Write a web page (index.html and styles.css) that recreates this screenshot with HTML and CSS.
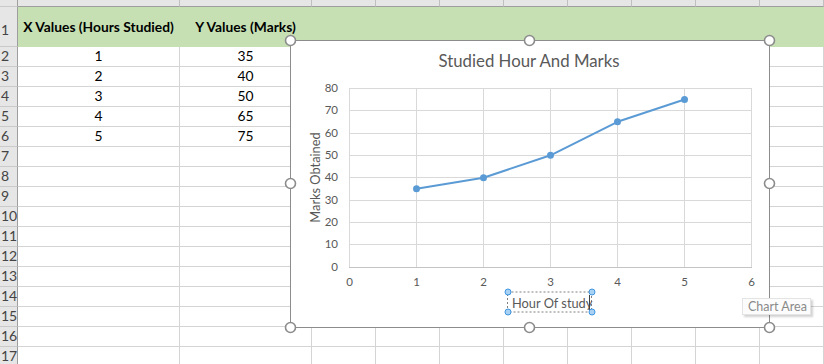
FILE: index.html
```html
<!DOCTYPE html>
<html lang="en">
<head>
  <meta charset="UTF-8">
  <title>Studied Hour And Marks</title>
  <link rel="stylesheet" href="styles.css">
</head>
<body>

<div class="sheet">
  <!-- column headers (cut off at the top) -->
  <div class="row head-row">
    <div class="num"></div><div><span>A</span></div><div><span>B</span></div><div><span>C</span></div><div><span>D</span></div><div><span>E</span></div><div><span>F</span></div><div><span>G</span></div><div><span>H</span></div><div><span>I</span></div><div><span>J</span></div>
  </div>
  <div class="row title-row">
    <div class="num">1</div><div class="bold">X Values (Hours Studied)</div><div class="bold">Y Values (Marks)</div><div></div><div></div><div></div><div></div><div></div><div></div><div></div><div></div>
  </div>
  <div class="row"><div class="num">2</div><div>1</div><div>35</div><div></div><div></div><div></div><div></div><div></div><div></div><div></div><div></div></div>
  <div class="row"><div class="num">3</div><div>2</div><div>40</div><div></div><div></div><div></div><div></div><div></div><div></div><div></div><div></div></div>
  <div class="row"><div class="num">4</div><div>3</div><div>50</div><div></div><div></div><div></div><div></div><div></div><div></div><div></div><div></div></div>
  <div class="row"><div class="num">5</div><div>4</div><div>65</div><div></div><div></div><div></div><div></div><div></div><div></div><div></div><div></div></div>
  <div class="row"><div class="num">6</div><div>5</div><div>75</div><div></div><div></div><div></div><div></div><div></div><div></div><div></div><div></div></div>
  <div class="row"><div class="num">7</div><div></div><div></div><div></div><div></div><div></div><div></div><div></div><div></div><div></div><div></div></div>
  <div class="row"><div class="num">8</div><div></div><div></div><div></div><div></div><div></div><div></div><div></div><div></div><div></div><div></div></div>
  <div class="row"><div class="num">9</div><div></div><div></div><div></div><div></div><div></div><div></div><div></div><div></div><div></div><div></div></div>
  <div class="row"><div class="num">10</div><div></div><div></div><div></div><div></div><div></div><div></div><div></div><div></div><div></div><div></div></div>
  <div class="row"><div class="num">11</div><div></div><div></div><div></div><div></div><div></div><div></div><div></div><div></div><div></div><div></div></div>
  <div class="row"><div class="num">12</div><div></div><div></div><div></div><div></div><div></div><div></div><div></div><div></div><div></div><div></div></div>
  <div class="row"><div class="num">13</div><div></div><div></div><div></div><div></div><div></div><div></div><div></div><div></div><div></div><div></div></div>
  <div class="row"><div class="num">14</div><div></div><div></div><div></div><div></div><div></div><div></div><div></div><div></div><div></div><div></div></div>
  <div class="row"><div class="num">15</div><div></div><div></div><div></div><div></div><div></div><div></div><div></div><div></div><div></div><div></div></div>
  <div class="row"><div class="num">16</div><div></div><div></div><div></div><div></div><div></div><div></div><div></div><div></div><div></div><div></div></div>
  <div class="row"><div class="num">17</div><div></div><div></div><div></div><div></div><div></div><div></div><div></div><div></div><div></div><div></div></div>

  <!-- chart object floating over the cells -->
  <div class="chart">
    <svg width="480" height="288" viewBox="0 0 480 288">
      <text class="chart-title" x="239" y="27" text-anchor="middle">Studied Hour And Marks</text>

      <!-- gridlines -->
      <g class="grid">
        <line x1="59" y1="48.5" x2="461" y2="48.5"/>
        <line x1="59" y1="70.5" x2="461" y2="70.5"/>
        <line x1="59" y1="93.5" x2="461" y2="93.5"/>
        <line x1="59" y1="115.5" x2="461" y2="115.5"/>
        <line x1="59" y1="137.5" x2="461" y2="137.5"/>
        <line x1="59" y1="160.5" x2="461" y2="160.5"/>
        <line x1="59" y1="182.5" x2="461" y2="182.5"/>
        <line x1="59" y1="204.5" x2="461" y2="204.5"/>
        <line x1="59.5" y1="48" x2="59.5" y2="227"/>
        <line x1="126.5" y1="48" x2="126.5" y2="227"/>
        <line x1="193.5" y1="48" x2="193.5" y2="227"/>
        <line x1="260.5" y1="48" x2="260.5" y2="227"/>
        <line x1="327.5" y1="48" x2="327.5" y2="227"/>
        <line x1="394.5" y1="48" x2="394.5" y2="227"/>
        <line x1="461.5" y1="48" x2="461.5" y2="227"/>
      </g>
      <line class="axis" x1="59" y1="227.5" x2="462" y2="227.5"/>

      <!-- y axis labels -->
      <g class="tick" text-anchor="end">
        <text x="48" y="51.5">80</text>
        <text x="48" y="73.5">70</text>
        <text x="48" y="96.5">60</text>
        <text x="48" y="118.5">50</text>
        <text x="48" y="140.5">40</text>
        <text x="48" y="163.5">30</text>
        <text x="48" y="185.5">20</text>
        <text x="48" y="207.5">10</text>
        <text x="48" y="230.5">0</text>
      </g>
      <!-- x axis labels -->
      <g class="tick" text-anchor="middle">
        <text x="59.5" y="245.5">0</text>
        <text x="126.5" y="245.5">1</text>
        <text x="193.5" y="245.5">2</text>
        <text x="260.5" y="245.5">3</text>
        <text x="327.5" y="245.5">4</text>
        <text x="394.5" y="245.5">5</text>
        <text x="461.5" y="245.5">6</text>
      </g>

      <g transform="translate(30 137.5) rotate(-90)">
        <text class="axis-title" x="0" y="0" text-anchor="middle">Marks Obtained</text>
      </g>

      <!-- series -->
      <polyline class="series" points="126.5,148.8 193.5,137.7 260.5,115.3 327.5,81.8 394.5,59.5"/>
      <g class="marker">
        <circle cx="126.5" cy="148.8" r="3.5"/>
        <circle cx="193.5" cy="137.7" r="3.5"/>
        <circle cx="260.5" cy="115.3" r="3.5"/>
        <circle cx="327.5" cy="81.8" r="3.5"/>
        <circle cx="394.5" cy="59.5" r="3.5"/>
      </g>

      <!-- selected x axis title -->
      <rect class="title-box" x="217.5" y="252" width="84" height="20"/>
      <text class="axis-title" x="222" y="268">Hour Of study</text>
      <line class="caret" x1="299.5" y1="255" x2="299.5" y2="271"/>
      <g class="sel-handle">
        <circle cx="218" cy="252" r="3"/>
        <circle cx="218" cy="272" r="3"/>
        <circle cx="302" cy="252" r="3"/>
        <circle cx="302" cy="272" r="3"/>
      </g>

      <!-- chart frame + resize handles -->
      <rect class="frame" x="0.5" y="0.5" width="479" height="287"/>
      <g class="handle">
        <circle cx="0.5" cy="0.5" r="5"/>
        <circle cx="239.5" cy="0.5" r="5"/>
        <circle cx="479.5" cy="0.5" r="5"/>
        <circle cx="0.5" cy="143.5" r="5"/>
        <circle cx="479.5" cy="143.5" r="5"/>
        <circle cx="0.5" cy="287.5" r="5"/>
        <circle cx="239.5" cy="287.5" r="5"/>
        <circle cx="479.5" cy="287.5" r="5"/>
      </g>
    </svg>
  </div>

  <div class="tooltip">Chart Area</div>
</div>

</body>
</html>
```

FILE: styles.css
```css
* {
  margin: 0;
  padding: 0;
  box-sizing: border-box;
}
body {
  font-family: Lato, 'Liberation Sans', sans-serif;
  background: #fff;
  overflow: hidden;
}
.sheet {
  position: relative;
  width: 824px;
  height: 364px;
  overflow: hidden;
}
.row {
  display: grid;
  grid-template-columns: 18px 162px 132px repeat(8, 64px);
  height: 20px;
}
.row > div {
  display: flex;
  align-items: flex-end;
  justify-content: center;
  padding-bottom: 3px;
  border-right: 1px solid #d4d4d4;
  border-bottom: 1px solid #d4d4d4;
  font-size: 13.8px;
  line-height: 14px;
  color: #000;
  white-space: nowrap;
}
.row > .num {
  justify-content: flex-start;
  padding-left: 1px;
  background: #e6e6e6;
  border-right-color: #9e9e9e;
  border-bottom-color: #cacaca;
  font-size: 14px;
  color: #444;
}
.head-row {
  height: 7px;
}
.head-row > div {
  align-items: flex-start;
  padding-bottom: 0;
  overflow: hidden;
  background: #e6e6e6;
  border-right-color: #c0c0c0;
  border-bottom-color: #9e9e9e;
}
.head-row span {
  display: block;
  margin-top: -12px;
  font-size: 14px;
  color: #333;
}
.title-row {
  height: 40px;
}
.title-row > div {
  align-items: center;
  padding-bottom: 0;
  background: #c6e0b4;
  border-color: #c6e0b4;
}
.title-row > .num {
  align-items: flex-end;
  padding-bottom: 9px;
}
.bold {
  font-weight: bold;
}
.chart {
  position: absolute;
  left: 290px;
  top: 40px;
  width: 480px;
  height: 288px;
  background: #fff;
}
.chart svg {
  display: block;
  overflow: visible;
  font-family: Lato, 'Liberation Sans', sans-serif;
}
.chart-title {
  font-size: 16.8px;
  fill: #595959;
}
.grid line {
  stroke: #d9d9d9;
  stroke-width: 1;
}
.axis {
  stroke: #c4c4c4;
  stroke-width: 1;
}
.tick {
  font-size: 11.5px;
  fill: #595959;
}
.axis-title {
  font-size: 12.8px;
  fill: #595959;
}
.series {
  fill: none;
  stroke: #5b9bd5;
  stroke-width: 2;
  stroke-linejoin: round;
}
.marker circle {
  fill: #5b9bd5;
}
.title-box {
  fill: none;
  stroke: #808080;
  stroke-width: 1;
  stroke-dasharray: 2 2;
}
.caret {
  stroke: #404040;
  stroke-width: 1;
}
.sel-handle circle {
  fill: #a9d1f3;
  stroke: #3f97e0;
  stroke-width: 1;
}
.frame {
  fill: none;
  stroke: #8c8c8c;
  stroke-width: 1;
}
.handle circle {
  fill: #fff;
  stroke: #8c8c8c;
  stroke-width: 1.6;
}
.tooltip {
  position: absolute;
  left: 742px;
  top: 298px;
  width: 69px;
  height: 17px;
  padding-left: 5px;
  background: #fcfcfc;
  border: 1px solid #e4e4e4;
  box-shadow: 2px 2px 2px rgba(0, 0, 0, 0.18);
  font-size: 12.5px;
  line-height: 15px;
  color: #8a8a8a;
}
```
